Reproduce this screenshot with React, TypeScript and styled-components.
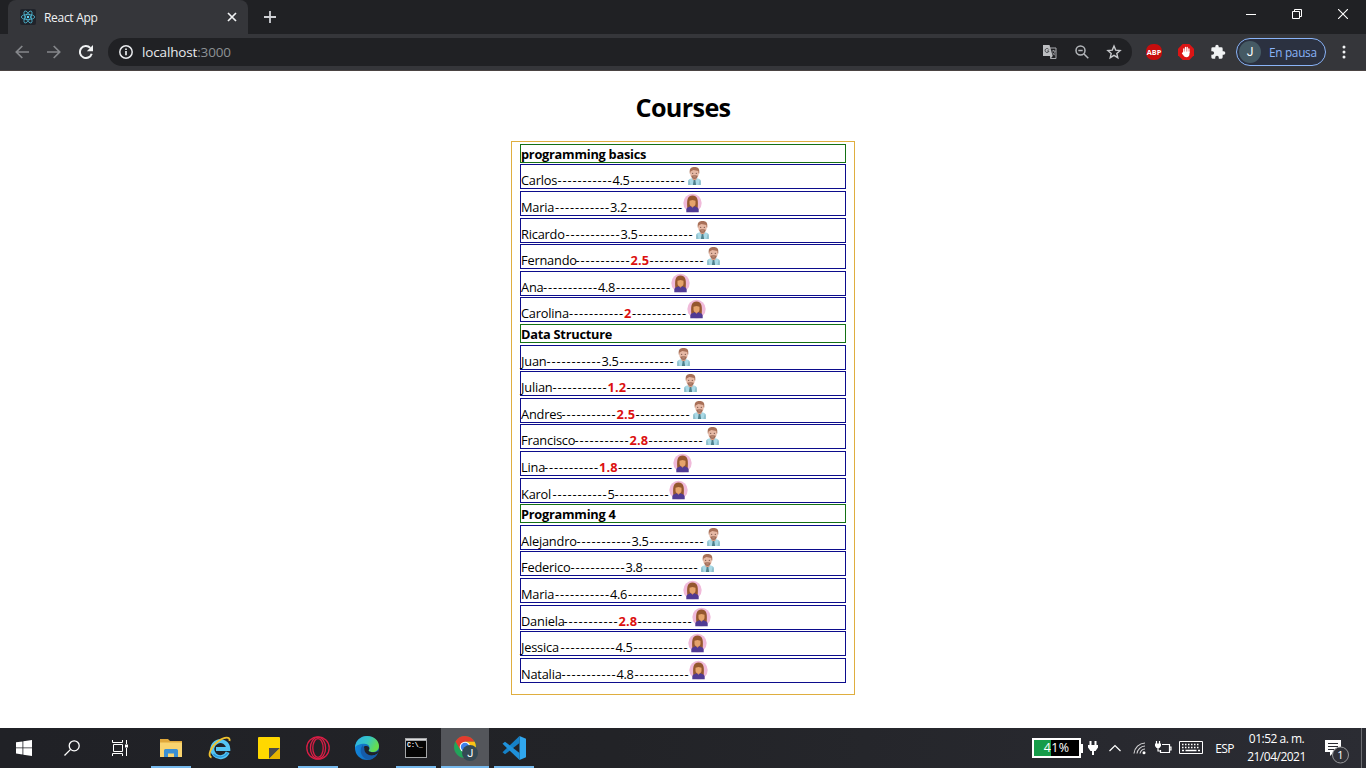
import React from "react";
import styled, { createGlobalStyle, css } from "styled-components";

const GlobalStyle = createGlobalStyle`
  *, *::before, *::after { box-sizing: border-box; }
  html, body { margin: 0; padding: 0; }
  body { background: #fff; overflow: hidden; font-family: "Open Sans", "Noto Sans", sans-serif; }
  svg { display: block; flex: none; }
`;

const Screen = styled.div`
  width: 1366px;
  height: 768px;
  display: flex;
  flex-direction: column;
  overflow: hidden;
`;

/* ---------- browser chrome ---------- */
const TabStrip = styled.div`
  height: 34px;
  background: #202124;
  display: flex;
  align-items: stretch;
  padding-left: 8px;
`;
const Tab = styled.div`
  width: 240px;
  background: #35363a;
  border-radius: 8px 8px 0 0;
  display: flex;
  align-items: center;
  padding: 0 11px 0 12px;
`;
const Favicon = styled.div`
  width: 16px;
  height: 16px;
  background: #20232a;
  border-radius: 2px;
`;
const TabTitle = styled.span`
  flex: 1;
  margin-left: 8px;
  font-size: 12px;
  letter-spacing: -0.3px;
  color: #f1f3f4;
`;
const NewTab = styled.div`
  display: flex;
  align-items: center;
  margin-left: 16px;
`;
const WindowButtons = styled.div`
  margin-left: auto;
  display: flex;
`;
const WindowButton = styled.div`
  width: 46px;
  height: 28px;
  display: flex;
  align-items: center;
  justify-content: center;
`;
const Toolbar = styled.div`
  height: 37px;
  background: #35363a;
  border-bottom: 1px solid #4a4342;
  display: flex;
  align-items: center;
`;
const NavButton = styled.div`
  width: 32px;
  display: flex;
  justify-content: center;
`;
const NavGroup = styled.div`
  display: flex;
  padding: 0 6px;
`;
const Omnibox = styled.div`
  width: 1024px;
  height: 28px;
  border-radius: 14px;
  background: #202124;
  display: flex;
  align-items: center;
  padding: 0 10px 0 11px;
`;
const Address = styled.span`
  flex: 1;
  margin-left: 9px;
  font-size: 13.5px;
  letter-spacing: -0.15px;
  color: #e8eaed;
`;
const Port = styled.span`
  color: #8d9195;
`;
const OmniIcons = styled.div`
  display: flex;
  gap: 16px;
`;
const Extensions = styled.div`
  display: flex;
  gap: 16px;
  margin-left: 14px;
`;
const AdBadge = styled.div`
  width: 16px;
  height: 16px;
  border-radius: 7px;
  background: #c70d0d;
  color: #fff;
  font: bold 7.3px/16px "Open Sans", sans-serif;
  text-align: center;
`;
const Profile = styled.div`
  width: 90px;
  height: 28px;
  margin-left: 10px;
  border: 1px solid #8ab4f8;
  border-radius: 14px;
  background: #2b3140;
  display: flex;
  align-items: center;
  padding-left: 2px;
  color: #8ab4f8;
  font-size: 11.8px;
  letter-spacing: -0.3px;
`;
const Avatar = styled.span`
  width: 22px;
  height: 22px;
  border-radius: 50%;
  background: #455a64;
  color: #fff;
  font-family: Roboto, sans-serif;
  font-size: 12px;
  line-height: 22px;
  text-align: center;
  margin-right: 8px;
`;
const MenuSlot = styled.div`
  margin-left: 10px;
`;

/* ---------- page ---------- */
const Page = styled.main`
  flex: 1;
  background: #fff;
  display: flex;
  flex-direction: column;
  align-items: center;
  color: #000;
`;
const Title = styled.h1`
  margin: 18px 0 0;
  height: 52px;
  line-height: 36px;
  font-size: 25.2px;
  font-weight: 700;
  letter-spacing: -0.65px;
`;
const CourseBox = styled.section`
  width: 344px;
  height: 554px;
  border: 1px solid #dfae3f;
  padding: 1.86px 8px 0;
`;
const CourseName = styled.div`
  height: 19px;
  margin-bottom: 1.55px;
  border: 1px solid #147014;
  font-size: 12.8px;
  font-weight: 700;
  line-height: 18px;
  letter-spacing: -0.25px;
  white-space: nowrap;
`;
const StudentRow = styled.div`
  height: 25px;
  margin-bottom: 1.61px;
  border: 1px solid #0c0c8c;
  display: flex;
  align-items: flex-start;
  font-size: 12.8px;
`;
const Cell = styled.span<{ $w: number }>`
  width: ${(p) => p.$w}px;
  flex: none;
  line-height: 18px;
  padding-top: 6px;
  white-space: nowrap;
  letter-spacing: -0.2px;
`;
const Dashes = styled(Cell)`
  letter-spacing: 0.88px;
`;
const Grade = styled(Cell)<{ $failed: boolean }>`
  letter-spacing: -0.3px;
  ${(p) =>
    p.$failed &&
    css`
      color: #dc1010;
      font-weight: 700;
      letter-spacing: 0.2px;
    `}
`;
const Portrait = styled.div`
  padding-top: 1px;
  margin-left: -0.5px;
`;

/* ---------- taskbar ---------- */
const Taskbar = styled.footer`
  height: 40px;
  background: linear-gradient(90deg, #202126 0%, #222327 45%, #2b2c33 100%);
  display: flex;
  color: #fff;
`;
const SystemButtons = styled.div`
  display: flex;
  width: 147px;
`;
const AppButtons = styled.div`
  display: flex;
  gap: 1px;
`;
const TaskButton = styled.div<{ $active?: boolean; $line?: boolean }>`
  width: 48px;
  height: 40px;
  display: flex;
  align-items: center;
  justify-content: center;
  background: ${(p) => (p.$active ? "#54565b" : "transparent")};
  ${(p) =>
    p.$line &&
    css`
      background-image: linear-gradient(#76b9ed, #76b9ed);
      background-size: ${p.$active ? 48 : 40}px 2px;
      background-position: center bottom;
      background-repeat: no-repeat;
    `}
`;
const Tray = styled.div`
  margin-left: auto;
  display: flex;
  align-items: center;
  font-size: 12px;
`;
const Battery = styled.div`
  width: 49px;
  height: 20px;
  border: 2px solid #fff;
  background: linear-gradient(90deg, #169c49 38%, #000 38%);
  font-size: 12.5px;
  line-height: 16px;
  letter-spacing: 0.3px;
  text-align: center;
`;
const BatteryTip = styled.div`
  width: 2px;
  height: 9px;
  background: #fff;
`;
const TraySlot = styled.div<{ $w: number }>`
  width: ${(p) => p.$w}px;
  display: flex;
  justify-content: center;
`;
const Language = styled.span`
  width: 36px;
  padding-right: 3px;
  text-align: center;
  font-size: 12px;
  letter-spacing: -0.6px;
`;
const Clock = styled.div`
  width: 65px;
  text-align: center;
  line-height: 18px;
  font-size: 12px;
  letter-spacing: -0.5px;
  white-space: nowrap;
`;
const Notices = styled.div`
  width: 49px;
  height: 40px;
  margin: 0 4px;
  padding-left: 12px;
  border-right: 1px solid #6c6d72;
`;

type Student = { name: string; w: number; grade: number; man?: boolean };
const courses: { title: string; students: Student[] }[] = [
  {
    title: "programming basics",
    students: [
      { name: "Carlos", w: 36.5, grade: 4.5, man: true },
      { name: "Maria", w: 34, grade: 3.2 },
      { name: "Ricardo", w: 44.5, grade: 3.5, man: true },
      { name: "Fernando", w: 54.5, grade: 2.5, man: true },
      { name: "Ana", w: 22, grade: 4.8 },
      { name: "Carolina", w: 48, grade: 2 },
    ],
  },
  {
    title: "Data Structure",
    students: [
      { name: "Juan", w: 25.5, grade: 3.5, man: true },
      { name: "Julian", w: 31.5, grade: 1.2, man: true },
      { name: "Andres", w: 40.5, grade: 2.5, man: true },
      { name: "Francisco", w: 53.5, grade: 2.8, man: true },
      { name: "Lina", w: 23, grade: 1.8 },
      { name: "Karol", w: 31.5, grade: 5 },
    ],
  },
  {
    title: "Programming 4",
    students: [
      { name: "Alejandro", w: 55.5, grade: 3.5, man: true },
      { name: "Federico", w: 49.5, grade: 3.8, man: true },
      { name: "Maria", w: 34, grade: 4.6 },
      { name: "Daniela", w: 42.5, grade: 2.8 },
      { name: "Jessica", w: 39.5, grade: 4.5 },
      { name: "Natalia", w: 40.5, grade: 4.8 },
    ],
  },
];

const ManIcon = () => (
  <svg width="19" height="20" viewBox="0 0 19 20">
    <path d="M3.2 19v-3.3c0-2 1.5-3 3.500-3.400h5.600c2 .4 3.500 1.400 3.500 3.400V19z" fill="#a9d9e6" />
    <path d="M3.200 19v-3.300c0-1 .4-1.800 1-2.300L5.600 19zM15.800 19v-3.300c0-1-.4-1.800-1-2.300L13.400 19z" fill="#8dbecb" />
    <path d="M7.500 11.500h4v2l-2 1.500-2-1.500z" fill="#d99d83" />
    <path d="M8.700 14h1.600l.8 5H7.900z" fill="#4f808c" />
    <path d="M4.700 5.200C4.700 2 6.600 1 9.500 1s4.800 1 4.800 4.200v2.200H4.700z" fill="#a87058" />
    <path d="M5.300 5.700l3-1.600 5 .8.4 3.200c0 2.600-1.700 4.700-4.200 4.700s-4.200-2-4.200-4.700z" fill="#e6b8a4" />
    <path d="M6.400 9.800c1-.8 5.200-.8 6.200 0-.1 2.100-1.300 3.300-3.100 3.300s-3-1.200-3.100-3.300z" fill="#a0705c" />
    <path d="M8.300 10.500h2.400v.8H8.300z" fill="#d09a85" />
    <circle cx="7.700" cy="7.300" r=".6" fill="#6b4a40" />
    <circle cx="11.300" cy="7.300" r=".6" fill="#6b4a40" />
  </svg>
);
const WomanIcon = () => (
  <svg width="19" height="20" viewBox="0 0 19 20">
    <circle cx="9.500" cy="10" r="9.200" fill="#f0bada" />
    <path d="M4.400 16C4 12 4 8.600 4.500 6.500 5 4 7 2.500 9.500 2.500s4.500 1.500 5 4c.5 2.100.5 5.500.1 9.500z" fill="#95572f" />
    <path d="M8 11h3v4H8z" fill="#d98e5c" />
    <path d="M6.500 7.800l3-.9 3 .9v2.600c0 1.700-1.200 3-3 3s-3-1.300-3-3z" fill="#e5a36c" />
    <path d="M3.300 19.300v-2.500c0-1.800 1.300-2.700 3.200-3.100l1.500-.4 1.500 1.500 1.500-1.500 1.500.4c1.900.4 3.200 1.300 3.200 3.100v2.500z" fill="#513b94" />
  </svg>
);
const ReactLogo = () => (
  <svg width="16" height="16" viewBox="0 0 16 16" fill="none" stroke="#4fb9d4" strokeWidth=".8">
    <ellipse cx="8" cy="8" rx="6.700" ry="2.600" />
    <ellipse cx="8" cy="8" rx="6.700" ry="2.600" transform="rotate(60 8 8)" />
    <ellipse cx="8" cy="8" rx="6.700" ry="2.600" transform="rotate(120 8 8)" />
    <circle cx="8" cy="8" r="1.200" fill="#61dafb" stroke="none" />
  </svg>
);

const BrowserBar = () => (
  <>
    <TabStrip>
      <Tab>
        <Favicon><ReactLogo /></Favicon>
        <TabTitle>React App</TabTitle>
        <svg width="10" height="10" viewBox="0 0 10 10" stroke="#f1f3f4" strokeWidth="1.700"><path d="M1 1l8 8M9 1L1 9" /></svg>
      </Tab>
      <NewTab>
        <svg width="12" height="12" viewBox="0 0 12 12" stroke="#cfd1d5" strokeWidth="1.800"><path d="M6 0v12M0 6h12" /></svg>
      </NewTab>
      <WindowButtons>
        <WindowButton><svg width="10" height="10"><path d="M0 5.500h10" stroke="#fff" /></svg></WindowButton>
        <WindowButton><svg width="10" height="10" fill="none" stroke="#fff"><path d="M.5 2.500h7v7h-7zM2.500 2.500v-2h7v7h-2" /></svg></WindowButton>
        <WindowButton><svg width="10" height="10" stroke="#fff" strokeWidth="1.100"><path d="M0 0l10 10M10 0L0 10" /></svg></WindowButton>
      </WindowButtons>
    </TabStrip>
    <Toolbar>
      <NavGroup>
        <NavButton><svg width="14" height="14" viewBox="0 0 14 14" fill="none" stroke="#85878b" strokeWidth="1.700"><path d="M14 7H1.500M7.300 1L1.300 7l6 6" /></svg></NavButton>
        <NavButton><svg width="14" height="14" viewBox="0 0 14 14" fill="none" stroke="#85878b" strokeWidth="1.700"><path d="M0 7h12.500M6.700 1l6 6-6 6" /></svg></NavButton>
        <NavButton><svg width="14" height="14" viewBox="0 0 14 14" fill="none" stroke="#f1f3f4" strokeWidth="2"><path d="M12.700 8.700A6 6 0 1 1 11.300 2.900" /><path d="M14 0v6.200H7.800z" fill="#f1f3f4" stroke="none" /></svg></NavButton>
      </NavGroup>
      <Omnibox>
        <svg width="14" height="14" viewBox="0 0 14 14" fill="none" stroke="#e8eaed" strokeWidth="1.500"><circle cx="7" cy="7" r="6.200" /><path d="M7 6v4.300M7 3.400v1.600" strokeWidth="1.700" /></svg>
        <Address>localhost<Port>:3000</Port></Address>
        <OmniIcons>
          <svg width="16" height="16" viewBox="0 0 16 16">
            <path d="M7 4h7v10.500H8.500" fill="none" stroke="#a9abae" />
            <path d="M1 1h6.500l3.200 11H1z" fill="#bdbfc2" />
            <path d="M8 12h2.700L8.300 15z" fill="#bdbfc2" />
            <path d="M6.800 5.500A2 2 0 1 0 7 7H5.200" fill="none" stroke="#45474b" />
            <path d="M9.800 7h3.700M11.500 6v1M13 7c-.3 2-1.200 3.200-2.400 4M10.400 8.500c.5 1.200 1.500 2.100 2.800 2.700" fill="none" stroke="#a9abae" strokeWidth=".8" />
          </svg>
          <svg width="16" height="16" viewBox="0 0 16 16" fill="none" stroke="#b4b7bb" strokeWidth="1.500"><circle cx="6.500" cy="6.500" r="4.500" /><path d="M10 10l4.300 4.300M4.300 6.500h4.400" /></svg>
          <svg width="16" height="16" viewBox="0 0 16 16" fill="none" stroke="#c7c9cc" strokeWidth="1.400"><path d="M8 2l1.700 4.100 4.400.4-3.300 2.900 1 4.300L8 11.400l-3.800 2.300 1-4.300-3.300-2.900 4.400-.4z" /></svg>
        </OmniIcons>
      </Omnibox>
      <Extensions>
        <AdBadge>ABP</AdBadge>
        <svg width="16" height="16" viewBox="0 0 16 16">
          <path d="M4.700 0h6.600L16 4.700v6.600L11.300 16H4.700L0 11.300V4.700z" fill="#dc1515" />
          <path d="M5.800 8.500V5M7.500 7.500V3.500M9.200 7.500V3.500M10.900 8.500V5" stroke="#fff" strokeWidth="1.300" strokeLinecap="round" />
          <path d="M5.200 7.500h6.300v2.200c0 2.200-1.100 3.600-3 3.600-1.400 0-2.400-.7-3-1.700L3.800 9.400l.7-.8z" fill="#fff" />
        </svg>
        <svg width="16" height="16" viewBox="0 0 24 24" fill="#f1f3f4"><path d="M20.500 11H19V7a2 2 0 0 0-2-2h-4V3.500a2.500 2.500 0 0 0-5 0V5H4a2 2 0 0 0-2 2v3.800h1.500a2.700 2.700 0 0 1 0 5.400H2V20a2 2 0 0 0 2 2h3.800v-1.500a2.700 2.700 0 0 1 5.400 0V22H17a2 2 0 0 0 2-2v-4h1.500a2.500 2.500 0 0 0 0-5z" /></svg>
      </Extensions>
      <Profile><Avatar>J</Avatar>En pausa</Profile>
      <MenuSlot><svg width="16" height="16" fill="#f1f3f4"><circle cx="8" cy="3" r="1.500" /><circle cx="8" cy="8" r="1.500" /><circle cx="8" cy="13" r="1.500" /></svg></MenuSlot>
    </Toolbar>
  </>
);

const DASHES = "-----------";
const Row = ({ student }: { student: Student }) => {
  const failed = student.grade < 3;
  const whole = Number.isInteger(student.grade);
  return (
    <StudentRow>
      <Cell $w={student.w}>{student.name}</Cell>
      <Dashes $w={55}>{DASHES}</Dashes>
      <Grade $w={(whole ? 7 : 18) + (failed ? 1 : 0)} $failed={failed}>{student.grade}</Grade>
      <Dashes $w={55}>{DASHES}</Dashes>
      <Portrait>{student.man ? <ManIcon /> : <WomanIcon />}</Portrait>
    </StudentRow>
  );
};

const TaskbarArea = () => (
  <Taskbar>
    <SystemButtons>
      <TaskButton><svg width="16" height="16" fill="#fff"><path d="M0 2.300l6.500-.9v6.100H0zM7.300 1.300L16 0v7.500H7.300zM0 8.300h6.500v6.200L0 13.600zM7.300 8.300H16V16l-8.700-1.300z" /></svg></TaskButton>
      <TaskButton><svg width="16" height="16" fill="none" stroke="#fff" strokeWidth="1.300"><circle cx="10.200" cy="5.800" r="5" /><path d="M6.600 9.400L.5 15.500" /></svg></TaskButton>
      <TaskButton>
        <svg width="16" height="16" fill="none" stroke="#fff"><path d="M.5 0v2.500h10V0M.5 16v-2.500h10V16M1.500 4.500h9v7h-9zM14.500 0v4M14.500 8v8" /><path d="M13 4.500h3v3h-3z" fill="#fff" stroke="none" /></svg>
      </TaskButton>
    </SystemButtons>
    <AppButtons>
      <TaskButton $line>
        <svg width="22" height="20" viewBox="0 0 22 20"><path d="M0 1h8l2 2h12v16H0z" fill="#e0a83b" /><path d="M0 4.500h22V19H0z" fill="#f9d46f" /><path d="M4 19v-6.500a1.500 1.500 0 0 1 1.500-1.500h11a1.500 1.500 0 0 1 1.500 1.500V19h-4v-3.500H8V19z" fill="#3a8fd3" /></svg>
      </TaskButton>
      <TaskButton>
        <svg width="24" height="24" viewBox="0 0 24 24" fill="none"><path d="M19.700 16.200A8 8 0 1 1 20.300 13H8" stroke="#55c5f2" strokeWidth="4" /><path d="M19.700 16.500A8.700 8.700 0 0 1 5.500 18" stroke="#2a98dc" strokeWidth="1.500" /><path d="M3.500 21.500C-1 20 2.800 10.500 10.500 5 16.500.600 22.500.400 21.500 5" stroke="#f0c22e" strokeWidth="1.900" /></svg>
      </TaskButton>
      <TaskButton>
        <svg width="22" height="22"><rect width="22" height="22" rx="1" fill="#ffd800" /><path d="M11 22V11h11z" fill="#4b4a49" /><path d="M11 22L22 11v11z" fill="#e7b300" /></svg>
      </TaskButton>
      <TaskButton $line>
        <svg width="24" height="24" fill="none" stroke="#d81e45" strokeWidth="1.300"><circle cx="12" cy="12" r="11.200" /><ellipse cx="12" cy="12" rx="7.600" ry="10.800" /><ellipse cx="12" cy="12" rx="5.200" ry="9.300" /></svg>
      </TaskButton>
      <TaskButton>
        <svg width="24" height="24" viewBox="0 0 24 24">
          <defs>
            <linearGradient id="edgeTop" x1="0" x2="1" y1="0" y2=".4"><stop offset="0" stopColor="#2daee8" /><stop offset=".55" stopColor="#36c6c4" /><stop offset="1" stopColor="#66dc4d" /></linearGradient>
            <linearGradient id="edgeLow" x1="0" x2="1"><stop offset="0" stopColor="#1286dc" /><stop offset="1" stopColor="#1259a4" /></linearGradient>
          </defs>
          <circle cx="12" cy="12" r="12" fill="url(#edgeLow)" />
          <path d="M0 12C.3 4.800 5.500 0 12 0c7 0 12 4.600 12 10 0 4-3 6-6.500 6-3 0-4.500-1-3.500-2.300 1.500-2 0-6-4.500-6C4.500 7.700.5 9.500 0 12z" fill="url(#edgeTop)" />
          <path d="M9.300 10.200c-2.800 4.600.8 10 6.200 9.700 2.500 0 4.800-.9 7-2.600l1.500-3c-2 2-4.200 2.300-7 1.900-3-.4-4.200-1.300-3-2.600 1.100-1.700-.7-4.700-4.700-3.400z" fill="#202227" />
          <path d="M7.700 9C3 14.500 7 23 14 23.800c3.500-.4 6.700-2.700 8.400-5.700-5.500 2.900-13.500 1.200-13.100-6z" fill="#155ca9" />
        </svg>
      </TaskButton>
      <TaskButton $line>
        <svg width="22" height="20"><path d="M0 0h22v20H0z" fill="#a5a7a9" /><path d="M1 3h20v16H1z" fill="#050505" /><path d="M1 1h20v1H1z" fill="#ddd" /><text x="2" y="9" fontSize="6.500" fontWeight="bold" fill="#fff" fontFamily="Liberation Mono, monospace">C:\_</text></svg>
      </TaskButton>
      <TaskButton $active $line>
        <svg width="26" height="26" viewBox="0 0 26 26">
          <circle cx="13" cy="12" r="11" fill="#22a45a" />
          <path d="M3.500 6.500A11 11 0 0 1 22.600 6.700H13l-4.800 8z" fill="#e33b2e" />
          <path d="M22.600 6.700A11 11 0 0 1 13 23l4.800-8.500L13 6.700z" fill="#fbc116" />
          <circle cx="13" cy="12" r="5.300" fill="#fff" /><circle cx="13" cy="12" r="4.200" fill="#3e80ec" />
          <circle cx="18" cy="18" r="8" fill="#344954" />
          <text x="18.300" y="22" fontSize="11" textAnchor="middle" fill="#fff" fontFamily="Roboto, sans-serif">J</text>
        </svg>
      </TaskButton>
      <TaskButton $line>
        <svg width="24" height="24" viewBox="0 0 24 24"><path d="M17.500 0L24 2.700v18.600L17.500 24z" fill="#30a7ef" /><path d="M17.500 0v7L3 18.300.5 16.300z" fill="#1581c8" /><path d="M17.500 24v-7L3 5.700.5 7.700z" fill="#1f91da" /></svg>
      </TaskButton>
    </AppButtons>
    <Tray>
      <Battery>41%</Battery>
      <BatteryTip />
      <TraySlot $w={20}><svg width="10" height="16" fill="#fff"><path d="M1.500 1h2v4h-2zM6.500 1h2v4h-2zM0 5h10v2.500L7.500 11H6v4H4v-4H2.500L0 7.500z" /></svg></TraySlot>
      <TraySlot $w={24}><svg width="12" height="8" fill="none" stroke="#fff" strokeWidth="1.200"><path d="M.5 7L6 1.500 11.500 7" /></svg></TraySlot>
      <TraySlot $w={26}><svg width="14" height="14" fill="none" stroke="#d5d5d7" strokeWidth="1.100"><path d="M1 12.500A11.500 11.500 0 0 1 12 2M4 12.500A8.500 8.500 0 0 1 12 5M7 12.500A5.500 5.500 0 0 1 12 8" /><circle cx="11" cy="11.700" r="1.500" fill="#fff" stroke="none" /></svg></TraySlot>
      <TraySlot $w={21}><svg width="17" height="14" fill="none" stroke="#fff" strokeWidth="1.200"><path d="M7 3.500h7.500v8H5.500V9M14.500 6h1.500v3h-1.500" /><path d="M1.500 0v3M4.500 0v3M3 7v3h2" /><path d="M0 2.500h6v2.500L4.500 7h-3L0 5z" fill="#fff" stroke="none" /></svg></TraySlot>
      <TraySlot $w={34}><svg width="24" height="14" fill="none" stroke="#fff"><path d="M.5.5h23v12H.5z" /><path d="M3 3.500h18M3 6.500h18" strokeDasharray="1.500 1.500" strokeWidth="1.500" /><path d="M3 9.500h2M6.500 9.500h11M19 9.500h2" strokeWidth="1.300" /></svg></TraySlot>
      <Language>ESP</Language>
      <Clock>01:52 a. m.<br />21/04/2021</Clock>
      <Notices>
        <svg width="26" height="40">
          <path d="M0 12h16v12H9l-4 4v-4H0z" fill="#fff" /><path d="M3 15.500h10M3 18.500h10M3 21.500h6" stroke="#2b2c33" />
          <circle cx="15.500" cy="27" r="8" fill="#303138" stroke="#96979a" />
          <text x="15.500" y="31" fontSize="11" textAnchor="middle" fill="#fff">1</text>
        </svg>
      </Notices>
    </Tray>
  </Taskbar>
);

export default function App() {
  return (
    <Screen>
      <GlobalStyle />
      <BrowserBar />
      <Page>
        <Title>Courses</Title>
        <CourseBox>
          {courses.map((course) => (
            <React.Fragment key={course.title}>
              <CourseName>{course.title}</CourseName>
              {course.students.map((s) => <Row key={s.name} student={s} />)}
            </React.Fragment>
          ))}
        </CourseBox>
      </Page>
      <TaskbarArea />
    </Screen>
  );
}
